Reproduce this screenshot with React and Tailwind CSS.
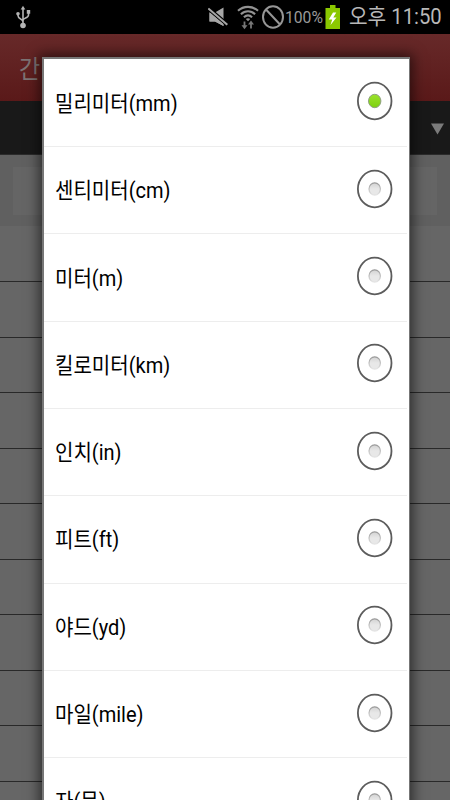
import React, { useState } from 'react';

const units = [
  '밀리미터(mm)',
  '센티미터(cm)',
  '미터(m)',
  '킬로미터(km)',
  '인치(in)',
  '피트(ft)',
  '야드(yd)',
  '마일(mile)',
  '자(문)',
];

const UsbIcon = () => (
  <svg width="15" height="24" viewBox="0 0 15 24" fill="none" stroke="#b4b4b4" strokeWidth="1.6">
    <path d="M7 4v16M7 17c0-3.500-5-2.500-5-6.500V9M7 15.500c0-3 5.500-2 5.500-5.500V8" />
    <path d="M7 .8l2.300 3.700H4.700z" fill="#b4b4b4" stroke="none" />
    <circle cx="7" cy="20.500" r="2.800" fill="#b4b4b4" stroke="none" />
    <circle cx="2" cy="8.700" r="1.800" fill="#b4b4b4" stroke="none" />
    <path d="M10.800 5h3.400v3.700h-3.400z" fill="#b4b4b4" stroke="none" />
  </svg>
);

const MuteIcon = () => (
  <svg width="20" height="20" viewBox="0 0 20 20">
    <path d="M1.500 5.500H7L15.500.5V19L7 14.500H1.500z" fill="#a6a6a6" />
    <path d="M-.5 .8L20 18.300" stroke="#000" strokeWidth="4.200" />
    <path d="M.3 1.500L19.300 17.700" stroke="#a6a6a6" strokeWidth="2.100" />
    <path d="M1.500 5.200L15.500 17V19L7 14.500H1.500z" fill="#a6a6a6" />
  </svg>
);

const WifiIcon = () => (
  <svg width="22" height="25" viewBox="0 0 22 25" fill="none" stroke="#929292" strokeWidth="2.100">
    <path d="M1 5.800c5.500-5.300 14.500-5.300 20 0M3.900 9.200c4.200-4 10-4 14.200 0M6.900 12.300c2.500-2.300 5.700-2.300 8.200 0" />
    <path d="M8.800 13.900q2.200-1.500 4.400 0L11 16.200z" fill="#929292" stroke="none" />
    <path d="M7.500 16.500v5M14 23.500v-5" strokeWidth="1.800" stroke="#777" />
    <path d="M4.500 20.300h6l-3 4zM11 19.500h6l-3-4z" fill="#777" stroke="none" />
  </svg>
);

const BlockedIcon = () => (
  <svg width="23" height="24" viewBox="0 0 23 24" fill="none" stroke="#969696" strokeWidth="2">
    <ellipse cx="11" cy="12" rx="10" ry="10.700" />
    <path d="M4 4.500l14 15" />
  </svg>
);

const BatteryIcon = () => (
  <svg width="15" height="24" viewBox="0 0 15 24">
    <path d="M5 0h5.500v3H15v21H.5V3H5z" fill="#8bc800" />
    <path d="M8 7.500L3.800 14.500h3.400l-1.700 5.500L11.500 12.500H8.300L11.300 7.500z" fill="#fff" />
  </svg>
);

const StatusBar = () => (
  <div className="flex h-[34px] items-center bg-black text-[#b8b8b8]">
    <div className="ml-4 flex-1"><UsbIcon /></div>
    <div className="-mt-[1px]"><MuteIcon /></div>
    <div className="ml-[9px]"><WifiIcon /></div>
    <div className="ml-[3px] -mt-[1px]"><BlockedIcon /></div>
    <span className="w-[40px] origin-left scale-x-[0.98] whitespace-nowrap pt-[1px] text-[16px] leading-none text-[#999]">100%</span>
    <div><BatteryIcon /></div>
    <div className="ml-[9px] w-[101px]">
      <span className="inline-block origin-left scale-x-[0.92] whitespace-nowrap text-[22px] leading-[34px]">오후 11:50</span>
    </div>
  </div>
);

// The calculator screen, dimmed behind the dialog
const Background = () => (
  <>
    <div className="h-[67px] bg-gradient-to-b from-[#672929] to-[#5a1919] pl-[19px]">
      <span className="inline-block origin-left scale-x-[0.92] text-[25px] leading-[71px] text-[#7d7474]">간</span>
    </div>
    <div className="flex h-[54px] items-center justify-end border-b border-[#2b2b2b] bg-[#191919] pr-[6px] pt-[3px]">
      <svg width="13" height="12" viewBox="0 0 13 12">
        <path d="M0 .5h13L6.500 11.500z" fill="#7b7b7b" />
      </svg>
    </div>
    <div className="h-[71px] bg-[#606060] px-[13px] pt-[12px]">
      <div className="h-[48px] bg-[#656565]" />
    </div>
    <div className="bg-[#666] pt-[0.5px]">
      {Array.from({ length: 11 }, (_, i) => (
        <div key={i} className="h-[55.5px] border-b border-[#292929]" />
      ))}
    </div>
  </>
);

const Radio = ({ checked }) => (
  <svg width="36" height="40" viewBox="0 0 36 40" className="-mt-[3px] shrink-0">
    <defs>
      <linearGradient id="dotOff" x1="0" y1="0" x2="0" y2="1">
        <stop offset="0" stopColor="#d2d2d2" />
        <stop offset="0.5" stopColor="#e8e8e8" />
      </linearGradient>
      <linearGradient id="rimOff" x1="0" y1="0" x2="0" y2="1">
        <stop offset="0" stopColor="#999" />
        <stop offset="1" stopColor="#e6e6e6" />
      </linearGradient>
      <linearGradient id="dotOn" x1="0" y1="0" x2="0" y2="1">
        <stop offset="0" stopColor="#9be32c" />
        <stop offset="1" stopColor="#7dd00f" />
      </linearGradient>
    </defs>
    <ellipse cx="17.700" cy="20" rx="16.800" ry="18.300" fill="#fff" stroke="#5c5c5c" strokeWidth="1.800" />
    {checked ? (
      <ellipse cx="17.700" cy="20" rx="6.200" ry="6.700" fill="url(#dotOn)" stroke="#8f9f82" strokeWidth="1" />
    ) : (
      <ellipse cx="17.700" cy="20" rx="5.700" ry="6.200" fill="url(#dotOff)" stroke="url(#rimOff)" strokeWidth="1.200" />
    )}
  </svg>
);

const App = () => {
  const [selected, setSelected] = useState(0);

  return (
    <div className="relative h-[800px] w-[450px] overflow-hidden font-['Roboto','Noto_Sans_CJK_KR',sans-serif]">
      <StatusBar />
      <Background />

      {/* Unit picker dialog */}
      <div className="absolute left-[42px] top-[57px] h-[760px] w-[368px] border-2 border-r border-[#777] bg-white pt-[0.8px] shadow-[0_0_12px_3px_rgba(0,0,0,0.55)]">
        {units.map((unit, i) => (
          <div
            key={unit}
            onClick={() => setSelected(i)}
            className="mr-[2px] flex h-[87.3px] cursor-pointer items-center justify-between border-b border-[#ededed] pl-[11px] pr-[14px]"
          >
            <span className="mt-[2px] inline-block origin-left scale-x-[0.91] whitespace-nowrap text-[22px] leading-8 text-black">{unit}</span>
            <Radio checked={selected === i} />
          </div>
        ))}
      </div>
    </div>
  );
};

export default App;
